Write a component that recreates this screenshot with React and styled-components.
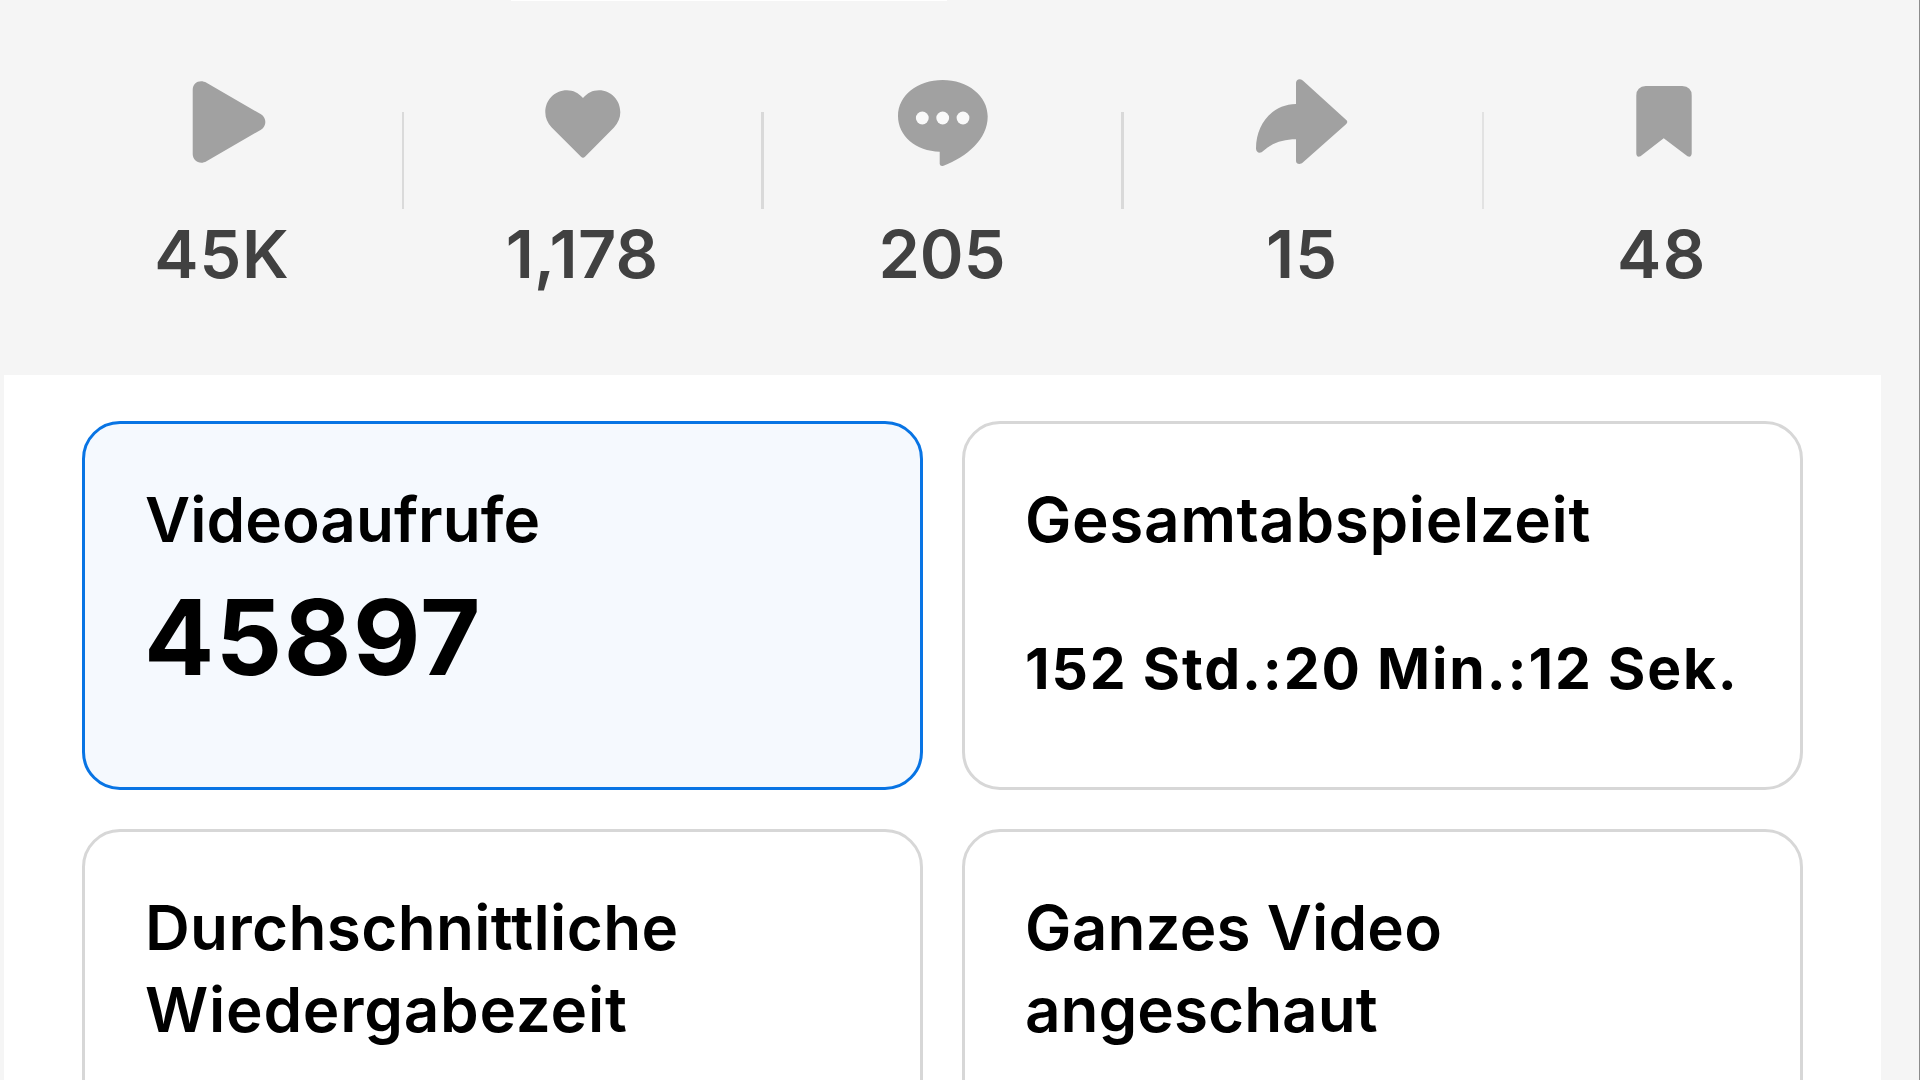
import React from "react";
import styled, { createGlobalStyle } from "styled-components";

const App = () => {
  return (
    <>
      <GlobalStyle />
      <Page>
        <TopEdge />
        <StatBar>
          {stats.map((stat) => (
            <Stat key={stat.name}>
              <Icon viewBox="0 0 96 96" aria-hidden="true">
                {stat.icon}
              </Icon>
              <StatValue $spacing={stat.spacing}>{stat.value}</StatValue>
              {stat.line && <Divider $color={stat.line} $width={stat.lineWidth} />}
            </Stat>
          ))}
        </StatBar>

        <Panel>
          <Card $active>
            <TitleLine $spacing="0.05px">Videoaufrufe</TitleLine>
            <BigValue>45897</BigValue>
          </Card>
          <Card>
            <TitleLine $spacing="0.6px">Gesamtabspielzeit</TitleLine>
            <TimeValue>152 Std.:20 Min.:12 Sek.</TimeValue>
          </Card>
          <Card>
            <TitleLine $spacing="0.35px">Durchschnittliche</TitleLine>
            <TitleLine $spacing="0.75px">Wiedergabezeit</TitleLine>
          </Card>
          <Card>
            <TitleLine $spacing="0.2px">Ganzes Video</TitleLine>
            <TitleLine $spacing="0px">angeschaut</TitleLine>
          </Card>
        </Panel>
      </Page>
    </>
  );
};

export default App;

const stats = [
  {
    name: "views",
    value: "45K",
    spacing: "0.8px",
    line: "#dadada",
    lineWidth: 2,
    icon: (
      <path d="M17.7 16C17.7 8.5 25 5 31.5 8.8L86 40.3C91.8 44 91.8 52 86 55.7L31.5 87.2C25 91 17.7 87 17.7 80Z" />
    ),
  },
  {
    name: "likes",
    value: "1,178",
    spacing: "0.2px",
    line: "#d9d9d9",
    lineWidth: 3,
    icon: (
      <path d="M48 24C43.5 19 38 16.3 32 16.3C19.5 16.3 10.3 26 10.3 38.3C10.3 44 12.5 49 16.7 53.5L46 82.7Q48 84.6 50 82.7L79 53.5C83 49 85.3 44 85.3 38.3C85.3 26 76 16.3 64 16.3C57.5 16.3 52.5 19 48 24Z" />
    ),
  },
  {
    name: "comments",
    value: "205",
    spacing: "0px",
    line: "#d9d9d9",
    lineWidth: 3,
    icon: (
      <>
        <path d="M47.7 6C22.5 6 3 21.5 3 42C3 62 21 77.2 44.7 77.7V90Q45.2 92.6 48.5 91.7C72 83 92.7 65 92.7 42.5C92.7 21.5 72.5 6 47.7 6Z" />
        <g fill="#f9f9f9">
          <circle cx="27.3" cy="44" r="6.4" />
          <circle cx="47.7" cy="44" r="6.4" />
          <circle cx="68" cy="44" r="6.4" />
        </g>
      </>
    ),
  },
  {
    name: "shares",
    value: "15",
    spacing: "1px",
    line: "#e2e2e2",
    lineWidth: 2,
    icon: (
      <path d="M41 30V9C41 5.2 45 4 47.8 6.6L91 45.8Q93.6 48 91 50.2L47.8 88.6C45 91.2 41 90 41 87V65.3C28 65.3 17 69 8.5 76.8C5.5 80 1 79 1 74.5C1 50 17 30.5 41 30Z" />
    ),
  },
  {
    name: "saves",
    value: "48",
    spacing: "1.5px",
    icon: (
      <path d="M30.8 12H67.2Q76.7 12.5 76.7 21.5V79.5Q76.3 83.8 72.5 82.2L48.7 64.2L25.5 82.2Q21.5 83.8 21.3 79.5V21.5Q21.5 12.5 30.8 12Z" />
    ),
  },
];

const GlobalStyle = createGlobalStyle`
  * {
    box-sizing: border-box;
  }

  body {
    margin: 0;
    overflow: hidden;
    background: #f5f5f5;
    font-family: Inter, "Liberation Sans", sans-serif;
  }
`;

const Page = styled.div`
  width: 1920px;
  height: 1080px;
  overflow: hidden;
  display: flex;
  flex-direction: column;
  background: #f5f5f5;
  border-right: 1px solid #8c8c8c;
`;

const TopEdge = styled.div`
  flex: none;
  width: 436px;
  height: 1px;
  margin-left: 511px;
  background: #fff;
`;

const StatBar = styled.div`
  flex: none;
  display: flex;
  height: 374px;
  padding: 73px 0 0 43px;
`;

const Stat = styled.div`
  position: relative;
  width: 360px;
  display: flex;
  flex-direction: column;
  align-items: center;
`;

const Icon = styled.svg`
  display: block;
  width: 96px;
  height: 96px;
  fill: #a1a1a1;
`;

const StatValue = styled.div`
  margin-top: 44px;
  padding-right: 2px;
  font-size: 66.5px;
  font-weight: 620;
  line-height: 80px;
  letter-spacing: ${(props) => props.$spacing};
  color: #414141;
  white-space: nowrap;
`;

const Divider = styled.div`
  position: absolute;
  top: 38px;
  right: -1px;
  width: ${(props) => props.$width}px;
  height: 97px;
  background: ${(props) => props.$color};
`;

const Panel = styled.div`
  flex: none;
  display: grid;
  grid-template-columns: 841px 841px;
  grid-auto-rows: 369px;
  gap: 39px;
  width: 1877px;
  height: 705px;
  margin-left: 4px;
  padding: 46px 0 0 78px;
  background: #fff;
`;

const Card = styled.div`
  padding: 55px 0 0 60px;
  border: 3px solid ${(props) => (props.$active ? "#0874e4" : "#d7d7d7")};
  border-radius: 38px;
  background: ${(props) => (props.$active ? "#f5f9fe" : "#fff")};
  color: #000;
`;

const TitleLine = styled.div`
  font-size: 62px;
  font-weight: 640;
  line-height: 82px;
  letter-spacing: ${(props) => props.$spacing};
  white-space: nowrap;
`;

const BigValue = styled.div`
  margin-top: 26px;
  margin-left: -1px;
  font-size: 104px;
  font-weight: 700;
  line-height: 100px;
  letter-spacing: 1.5px;
`;

const TimeValue = styled.div`
  margin-top: 73px;
  font-size: 57px;
  font-weight: 700;
  line-height: 70px;
  letter-spacing: 1.85px;
  white-space: nowrap;
`;
